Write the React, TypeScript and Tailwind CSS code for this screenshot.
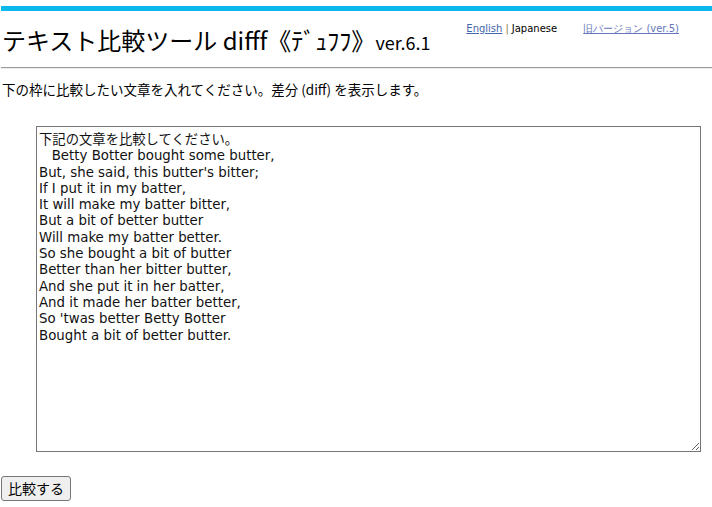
const sample = `下記の文章を比較してください。
   Betty Botter bought some butter,
But, she said, this butter's bitter;
If I put it in my batter,
It will make my batter bitter,
But a bit of better butter
Will make my batter better.
So she bought a bit of butter
Better than her bitter butter,
And she put it in her batter,
And it made her batter better,
So 'twas better Betty Botter
Bought a bit of better butter.`;

export default function App() {
  return (
    <div className="min-h-screen bg-white text-black font-['Noto_Sans_CJK_JP',sans-serif]">
      <div className="pt-[6px] pl-px">
        <div className="h-[5px] bg-[#0bb8ec]" />
      </div>

      <header className="flex items-start pl-[2px] pt-[12px]">
        <h1 className="text-[24px] leading-[34px] font-normal whitespace-nowrap">
          テキスト比較ツール difff《ﾃﾞｭﾌﾌ》
          <span className="text-[18px]">ver.6.1</span>
        </h1>
        <div className="ml-auto mr-[33px] flex items-center mt-[-2px] text-[10px] font-['DejaVu_Sans',sans-serif] whitespace-nowrap">
          <a href="#" className="text-[#4466aa] underline">English</a>
          <span className="mx-[3px] text-[#8a7a44]">|</span>
          <span>Japanese</span>
          <a href="#" className="ml-[26px] text-[#6677bb] underline">旧バージョン (ver.5)</a>
        </div>
      </header>

      <hr className="mt-[8px] ml-px border-t border-b border-t-[#999] border-b-[#eee]" />

      <p className="mt-[11px] pl-[2px] text-[13.5px] leading-[18px]">
        下の枠に比較したい文章を入れてください。差分 (diff) を表示します。
      </p>

      <div className="mt-[28px] pl-[36px] pr-[11px]">
        <textarea
          defaultValue={sample}
          className="block w-full h-[326px] border border-[#767676] px-[2px] pt-[5px] text-[13.33px] leading-[16.3px] text-[#111] font-['DejaVu_Sans','Noto_Sans_CJK_JP',sans-serif] resize-y outline-none"
        />
      </div>

      <div className="mt-[23px] pl-px">
        <button className="h-[25px] px-[6px] rounded-[3px] border border-[#767676] bg-[#efefef] text-[14px] leading-none text-black">
          比較する
        </button>
      </div>
    </div>
  );
}
